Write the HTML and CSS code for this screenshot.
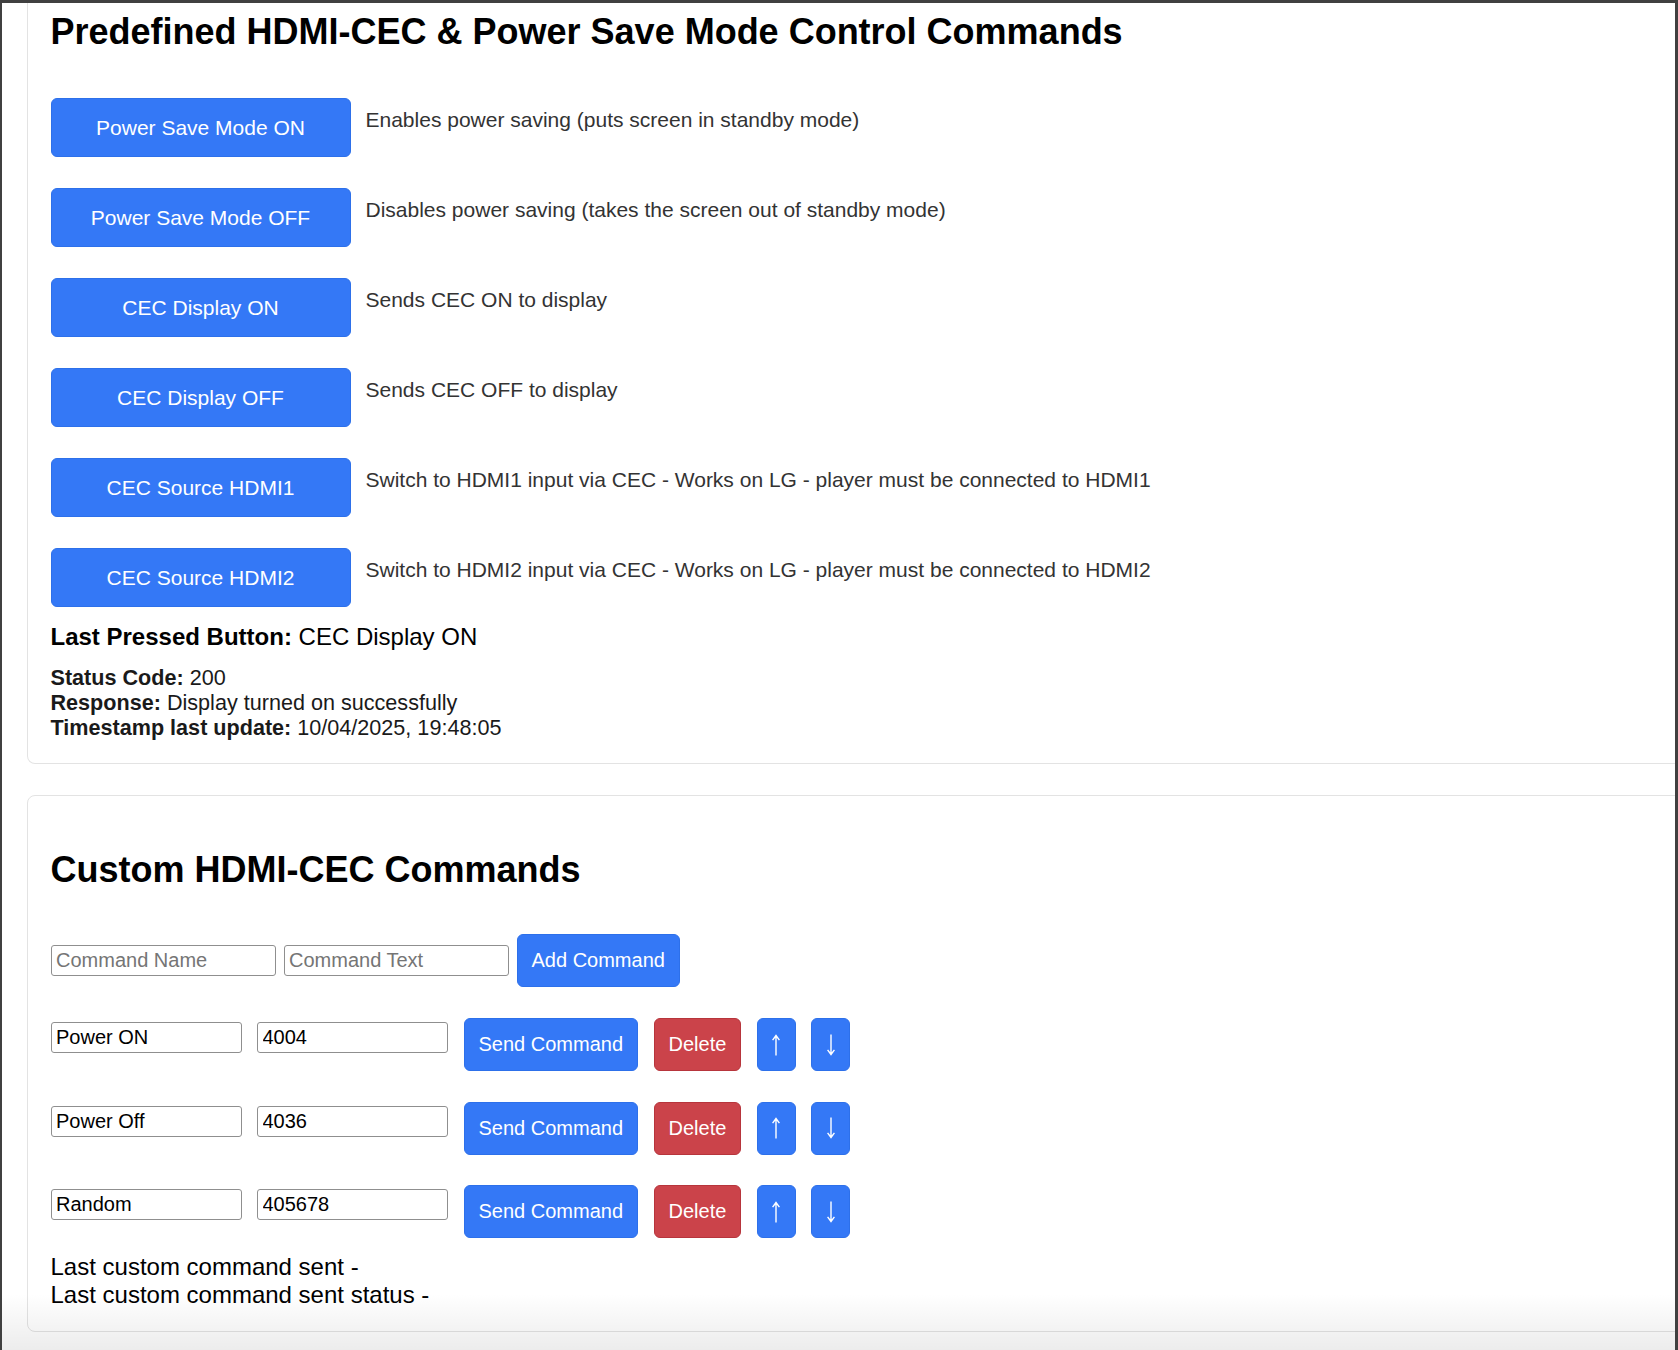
FILE: index.html
```html
<!DOCTYPE html>
<html lang="en">
<head>
<meta charset="utf-8">
<title>HDMI-CEC Control</title>
<link rel="stylesheet" href="styles.css">
</head>
<body>
<div class="window">
  <main class="page">
    <section class="card card-top">
      <h2 class="card-title">Predefined HDMI-CEC &amp; Power Save Mode Control Commands</h2>
      <div class="preset-list">
        <div class="preset-row">
          <button class="btn btn-preset">Power Save Mode ON</button>
          <span class="preset-desc">Enables power saving (puts screen in standby mode)</span>
        </div>
        <div class="preset-row">
          <button class="btn btn-preset">Power Save Mode OFF</button>
          <span class="preset-desc">Disables power saving (takes the screen out of standby mode)</span>
        </div>
        <div class="preset-row">
          <button class="btn btn-preset">CEC Display ON</button>
          <span class="preset-desc">Sends CEC ON to display</span>
        </div>
        <div class="preset-row">
          <button class="btn btn-preset">CEC Display OFF</button>
          <span class="preset-desc">Sends CEC OFF to display</span>
        </div>
        <div class="preset-row">
          <button class="btn btn-preset">CEC Source HDMI1</button>
          <span class="preset-desc">Switch to HDMI1 input via CEC - Works on LG - player must be connected to HDMI1</span>
        </div>
        <div class="preset-row">
          <button class="btn btn-preset">CEC Source HDMI2</button>
          <span class="preset-desc">Switch to HDMI2 input via CEC - Works on LG - player must be connected to HDMI2</span>
        </div>
      </div>
      <p class="last-pressed"><strong>Last Pressed Button:</strong> CEC Display ON</p>
      <div class="status">
        <div><strong>Status Code:</strong> 200</div>
        <div><strong>Response:</strong> Display turned on successfully</div>
        <div><strong>Timestamp last update:</strong> 10/04/2025, 19:48:05</div>
      </div>
    </section>

    <section class="card card-custom">
      <h2 class="card-title card-title-spaced">Custom HDMI-CEC Commands</h2>
      <div class="add-row">
        <input class="field field-add" type="text" placeholder="Command Name">
        <input class="field field-add" type="text" placeholder="Command Text">
        <button class="btn btn-small">Add Command</button>
      </div>
      <div class="cmd-list">
        <div class="cmd-row">
          <input class="field field-cmd" type="text" value="Power ON">
          <input class="field field-cmd" type="text" value="4004">
          <button class="btn btn-small">Send Command</button>
          <button class="btn btn-small btn-danger">Delete</button>
          <button class="btn btn-small btn-arrow" aria-label="Move up"><svg class="arrow-icon" viewBox="0 0 10 22" width="10" height="22"><path d="M5 21.5V1.5M1.6 6.2L5 1.5L8.4 6.2" fill="none" stroke="#ffffff" stroke-width="1.4"/></svg></button>
          <button class="btn btn-small btn-arrow" aria-label="Move down"><svg class="arrow-icon" viewBox="0 0 10 22" width="10" height="22"><path d="M5 0.5V20.5M1.6 15.8L5 20.5L8.4 15.8" fill="none" stroke="#ffffff" stroke-width="1.4"/></svg></button>
        </div>
        <div class="cmd-row">
          <input class="field field-cmd" type="text" value="Power Off">
          <input class="field field-cmd" type="text" value="4036">
          <button class="btn btn-small">Send Command</button>
          <button class="btn btn-small btn-danger">Delete</button>
          <button class="btn btn-small btn-arrow" aria-label="Move up"><svg class="arrow-icon" viewBox="0 0 10 22" width="10" height="22"><path d="M5 21.5V1.5M1.6 6.2L5 1.5L8.4 6.2" fill="none" stroke="#ffffff" stroke-width="1.4"/></svg></button>
          <button class="btn btn-small btn-arrow" aria-label="Move down"><svg class="arrow-icon" viewBox="0 0 10 22" width="10" height="22"><path d="M5 0.5V20.5M1.6 15.8L5 20.5L8.4 15.8" fill="none" stroke="#ffffff" stroke-width="1.4"/></svg></button>
        </div>
        <div class="cmd-row">
          <input class="field field-cmd" type="text" value="Random">
          <input class="field field-cmd" type="text" value="405678">
          <button class="btn btn-small">Send Command</button>
          <button class="btn btn-small btn-danger">Delete</button>
          <button class="btn btn-small btn-arrow" aria-label="Move up"><svg class="arrow-icon" viewBox="0 0 10 22" width="10" height="22"><path d="M5 21.5V1.5M1.6 6.2L5 1.5L8.4 6.2" fill="none" stroke="#ffffff" stroke-width="1.4"/></svg></button>
          <button class="btn btn-small btn-arrow" aria-label="Move down"><svg class="arrow-icon" viewBox="0 0 10 22" width="10" height="22"><path d="M5 0.5V20.5M1.6 15.8L5 20.5L8.4 15.8" fill="none" stroke="#ffffff" stroke-width="1.4"/></svg></button>
        </div>
      </div>
      <div class="custom-status">
        <div>Last custom command sent -</div>
        <div>Last custom command sent status -</div>
      </div>
    </section>
  </main>
</div>
</body>
</html>
```
FILE: styles.css
```css
* {
  box-sizing: border-box;
}

html,
body {
  margin: 0;
  padding: 0;
}

body {
  font-family: "Liberation Sans", Arial, Helvetica, sans-serif;
  background: #ffffff;
  color: #000000;
}

.window {
  position: relative;
  height: 1350px;
  overflow: hidden;
  background: #ffffff;
  border-top: 3px solid #404040;
  border-left: 2px solid #404040;
  border-right: 3px solid #404040;
}

.window::after {
  content: "";
  position: absolute;
  left: 0;
  right: 0;
  bottom: 0;
  height: 56px;
  background: linear-gradient(rgba(0, 0, 0, 0), rgba(0, 0, 0, 0.075));
  pointer-events: none;
}

.page {
  padding-left: 25px;
}

.card {
  width: 1700px;
  background: #ffffff;
  border: 1px solid #e3e3e3;
  border-radius: 8px;
  padding: 22.5px;
}

.card-top {
  border-top: 0;
  border-radius: 0 0 8px 8px;
  padding-top: 7.9px;
}

.card-custom {
  margin-top: 31px;
}

.card-title {
  margin: 0 0 30px;
  font-size: 36px;
  line-height: 41.4px;
  font-weight: bold;
  color: #000000;
}

.card-title-spaced {
  margin-top: 30px;
}

.preset-list {
  display: flex;
  flex-direction: column;
  gap: 31px;
  padding-top: 16px;
}

.preset-row {
  display: flex;
  align-items: flex-start;
}

.btn {
  font-family: inherit;
  color: #ffffff;
  background: #3478f6;
  border: 1px solid #2d70ea;
  border-radius: 6px;
  cursor: pointer;
  flex: none;
}

.btn-preset {
  width: 300px;
  height: 59px;
  padding: 0;
  font-size: 21px;
  line-height: 24px;
}

.preset-desc {
  margin-left: 15px;
  padding-top: 9.5px;
  font-size: 21px;
  line-height: 24.15px;
  color: #333333;
}

.last-pressed {
  margin: 15.5px 0 0;
  font-size: 24px;
  line-height: 27.6px;
  color: #000000;
}

.status {
  margin-top: 14.5px;
  font-size: 21.6px;
  line-height: 25.3px;
  color: #1a1a1a;
}

.add-row {
  display: flex;
  align-items: center;
  gap: 8px;
  padding-top: 14px;
}

.field {
  font-family: inherit;
  font-size: 20px;
  height: 31px;
  padding: 0 4.5px;
  border: 1px solid #8f8f8f;
  border-radius: 3px;
  color: #000000;
  background: #ffffff;
  flex: none;
}

.field::placeholder {
  color: #757575;
}

.field-add {
  width: 225px;
}

.btn-small {
  font-size: 20px;
  line-height: 23px;
  padding: 14px;
}

.btn-danger {
  background: #cb434a;
  border-color: #b7353c;
}

.btn-arrow {
  display: flex;
  align-items: center;
  justify-content: center;
  width: 39px;
  height: 53px;
  padding: 0;
}

.arrow-icon {
  display: block;
}

.cmd-list {
  display: flex;
  flex-direction: column;
  gap: 30.5px;
  margin-top: 31px;
}

.cmd-row {
  display: flex;
  align-items: flex-start;
  gap: 15.5px;
}

.field-cmd {
  width: 191px;
  margin-top: 4px;
}

.custom-status {
  margin-top: 15px;
  font-size: 24px;
  line-height: 27.6px;
  color: #000000;
}
```
